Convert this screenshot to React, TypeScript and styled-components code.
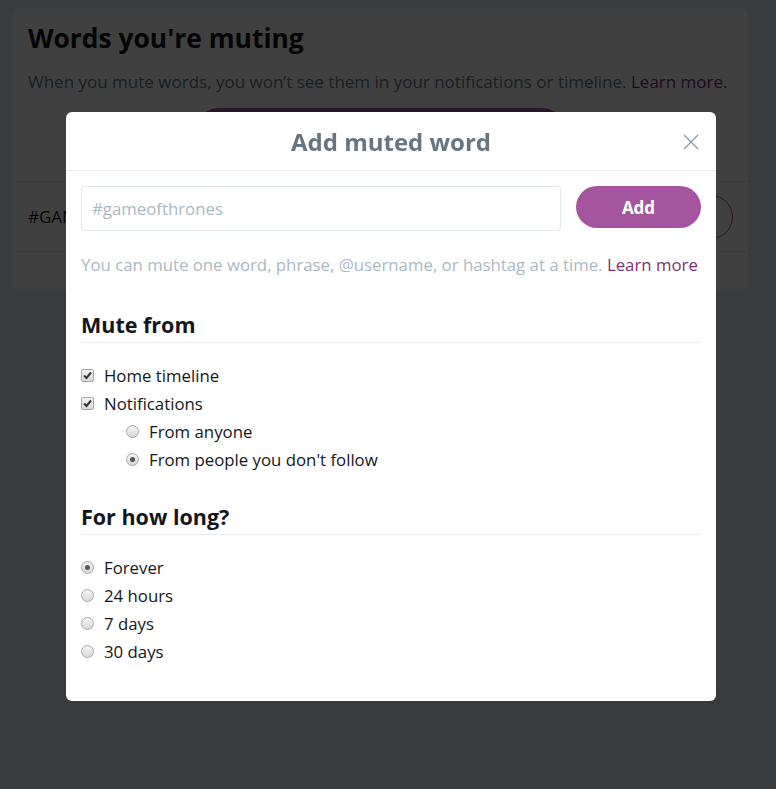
import styled, { createGlobalStyle } from "styled-components";

const GlobalStyle = createGlobalStyle`
  * { box-sizing: border-box; }
  body {
    margin: 0;
    background: #e6ecf0;
    font-family: "Open Sans", "Liberation Sans", sans-serif;
    color: #14171a;
  }
`;

const Page = styled.div`
  width: 776px;
  height: 789px;
  padding: 8px 28px 0 13px;
`;

const Card = styled.section`
  background: #fff;
  border-radius: 6px;
  height: 282px;
`;

const CardHead = styled.div`
  padding: 12px 15px 0;
`;

const PageTitle = styled.h1`
  margin: 0;
  font-size: 26.4px;
  font-weight: 700;
  line-height: 36px;
`;

const PageText = styled.p`
  margin: 14px 0 0;
  font-size: 17px;
  color: #657786;
  line-height: 24px;
`;

const PurpleLink = styled.a`
  color: #7b2f78;
  text-decoration: none;
`;

const BigButton = styled.div`
  width: 365px;
  height: 40px;
  margin: 14px auto 0;
  border-radius: 20px;
  background: #a4559e;
`;

const WordRow = styled.div`
  margin-top: 33px;
  height: 71px;
  border-top: 1px solid #e6ecf0;
  border-bottom: 1px solid #e6ecf0;
  padding: 0 15px;
  display: flex;
  align-items: center;
  justify-content: space-between;
  font-size: 17px;
`;

const RoundIcon = styled.div`
  width: 44px;
  height: 44px;
  border-radius: 50%;
  border: 1px solid #a4559e;
`;

const Overlay = styled.div`
  position: fixed;
  inset: 0;
  background: rgba(0, 0, 0, 0.75);
  padding: 112px 0 0 66px;
`;

const Modal = styled.div`
  width: 650px;
  height: 589px;
  background: #fff;
  border-radius: 6px;
`;

const ModalHeader = styled.header`
  height: 59px;
  border-bottom: 1px solid #e6ecf0;
  display: flex;
  align-items: center;
  justify-content: center;
  position: relative;
`;

const ModalTitle = styled.h2`
  margin: 0;
  font-size: 24px;
  font-weight: 700;
  color: #66757f;
`;

const CloseButton = styled.button`
  position: absolute;
  right: 16px;
  top: 21px;
  width: 18px;
  height: 18px;
  padding: 0;
  border: 0;
  background: none;
  display: flex;
`;

const ModalBody = styled.div`
  padding: 15px 15px 0;
`;

const InputRow = styled.div`
  display: flex;
  gap: 15px;
  align-items: flex-start;
`;

const WordInput = styled.input`
  flex: 1;
  height: 45px;
  border: 1px solid #e1e8ed;
  border-radius: 4px;
  padding: 0 10px;
  font-family: inherit;
  font-size: 16.8px;
  outline: none;
  &::placeholder { color: #aab8c2; }
`;

const AddButton = styled.button`
  width: 125px;
  height: 42px;
  border: 0;
  border-radius: 21px;
  background: #a4559e;
  color: #fff;
  font-family: inherit;
  font-size: 17px;
  font-weight: 700;
`;

const Hint = styled.p`
  margin: 22px 0 0;
  font-size: 16.8px;
  line-height: 24px;
  color: #aab8c2;
`;

const Section = styled.div<{ $gap: number }>`
  margin-top: ${(p) => p.$gap}px;
`;

const SectionTitle = styled.h3`
  margin: 0 0 18px;
  padding-bottom: 3px;
  font-size: 21.5px;
  font-weight: 700;
  line-height: 28px;
  border-bottom: 1px solid #e6ecf0;
`;

const Option = styled.label<{ $indent?: boolean }>`
  display: flex;
  align-items: center;
  gap: 10px;
  height: 28px;
  padding-left: ${(p) => (p.$indent ? "45px" : "0")};
  font-size: 16.8px;
  color: #14171a;
`;

const Box = styled.span<{ $round?: boolean }>`
  width: 13px;
  height: 13px;
  flex: none;
  border: 1px solid #a7a7a7;
  border-radius: ${(p) => (p.$round ? "50%" : "2px")};
  background: linear-gradient(#f4f4f4, #d9d9d9);
  display: flex;
  align-items: center;
  justify-content: center;
`;

const Dot = styled.span`
  width: 5px;
  height: 5px;
  border-radius: 50%;
  background: #555;
`;

function Check({ on }: { on: boolean }) {
  return (
    <Box>
      {on && (
        <svg width="9" height="9" viewBox="0 0 9 9">
          <path d="M1 4.5 L3.5 7 L8 1.5" stroke="#333" strokeWidth="2" fill="none" />
        </svg>
      )}
    </Box>
  );
}

function Radio({ on }: { on: boolean }) {
  return <Box $round>{on && <Dot />}</Box>;
}

export default function App() {
  return (
    <>
      <GlobalStyle />
      <Page>
        <Card>
          <CardHead>
            <PageTitle>Words you're muting</PageTitle>
            <PageText>
              When you mute words, you won’t see them in your notifications or timeline.{" "}
              <PurpleLink>Learn more.</PurpleLink>
            </PageText>
            <BigButton />
          </CardHead>
          <WordRow>
            #GAMEOFTHRONES
            <RoundIcon />
          </WordRow>
        </Card>
      </Page>
      <Overlay>
        <Modal>
          <ModalHeader>
            <ModalTitle>Add muted word</ModalTitle>
            <CloseButton aria-label="Close">
              <svg width="18" height="18" viewBox="0 0 18 18">
                <path d="M2 2 L16 16 M16 2 L2 16" stroke="#8899a6" strokeWidth="1.2" />
              </svg>
            </CloseButton>
          </ModalHeader>
          <ModalBody>
            <InputRow>
              <WordInput placeholder="#gameofthrones" />
              <AddButton>Add</AddButton>
            </InputRow>
            <Hint>
              You can mute one word, phrase, @username, or hashtag at a time.{" "}
              <PurpleLink>Learn more</PurpleLink>
            </Hint>
            <Section $gap={34}>
              <SectionTitle>Mute from</SectionTitle>
              <Option><Check on />Home timeline</Option>
              <Option><Check on />Notifications</Option>
              <Option $indent><Radio on={false} />From anyone</Option>
              <Option $indent><Radio on />From people you don't follow</Option>
            </Section>
            <Section $gap={30}>
              <SectionTitle>For how long?</SectionTitle>
              <Option><Radio on />Forever</Option>
              <Option><Radio on={false} />24 hours</Option>
              <Option><Radio on={false} />7 days</Option>
              <Option><Radio on={false} />30 days</Option>
            </Section>
          </ModalBody>
        </Modal>
      </Overlay>
    </>
  );
}
